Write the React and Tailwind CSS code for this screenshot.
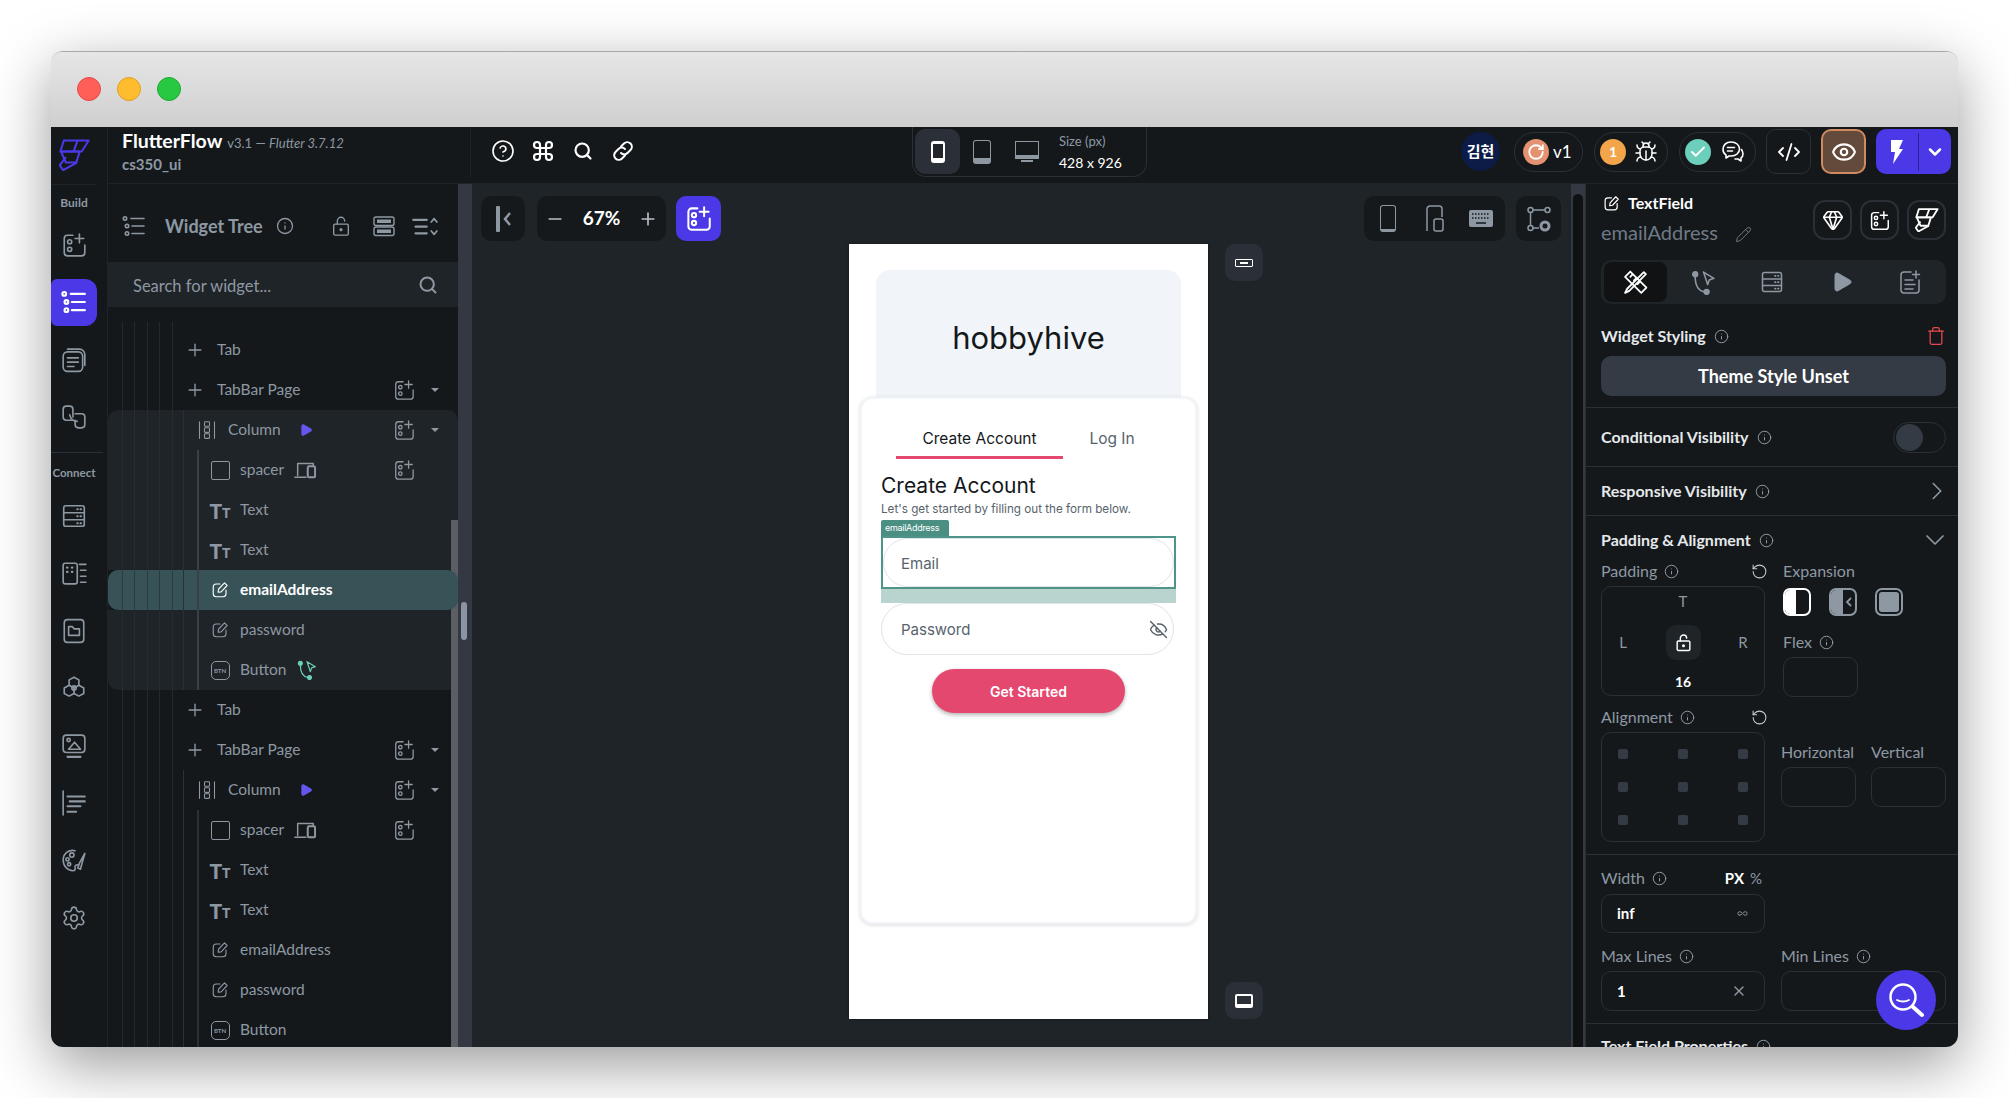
import React from 'react';
import {
  ChevronDown, ChevronRight, CircleHelp, CodeXml, Command, EyeOff, Eye, Gem, Info, Minus, Play, Plus, RotateCcw,
  Search, Settings, Trash, X, Check, Bug, Pencil, Infinity as InfinityIcon,
} from 'lucide-react';

const Ic = ({ s = 24, w = 1.6, c = 'currentColor', vb = '0 0 24 24', className = '', children }) => (
  <svg width={s} height={s} viewBox={vb} fill="none" stroke={c} strokeWidth={w} strokeLinecap="round" strokeLinejoin="round" className={`shrink-0 ${className}`}>
    {children}
  </svg>
);

const AddWidget = (p) => (
  <Ic {...p}>
    <path d="M11 3H6a3 3 0 0 0-3 3v13a3 3 0 0 0 3 3h13a3 3 0 0 0 3-3v-7" />
    <circle cx="8" cy="9" r="1.9" />
    <circle cx="8" cy="16" r="1.9" />
    <path d="M17 2v8M13 6h8" />
  </Ic>
);

const TreeIcon = (p) => (
  <Ic {...p}>
    <circle cx="3" cy="4.5" r="1.7" />
    <circle cx="5" cy="12" r="1.7" />
    <circle cx="5" cy="19.5" r="1.7" />
    <path d="M9 4.5h13M10 12h12M10 19.5h12" />
  </Ic>
);

const Logo = () => (
  <svg width="31" height="32" viewBox="0 0 90 92" fill="none" stroke="#4b39e8" strokeWidth="6" strokeLinejoin="round" className="shrink-0">
    <path d="M14 4H86L66 36H4Z" />
    <path d="M54 4L42 36" />
    <path d="M6 36H60L50 68H20Z" />
    <path d="M20 52L2 76L12 90L52 68" />
  </svg>
);

const LockIcon = (p) => (
  <Ic {...p}>
    <rect x="4" y="10" width="16" height="12" rx="1.5" />
    <path d="M8 10V6.5a4 4 0 0 1 8 0" />
    <circle cx="12" cy="16" r="1" fill="currentColor" />
  </Ic>
);

const RowsIcon = (p) => (
  <Ic {...p}>
    <rect x="2" y="3" width="20" height="8.5" rx="2" />
    <rect x="2" y="13" width="20" height="8.5" rx="2" />
    <path d="M5 7.2h14M5 17.2h14" strokeWidth="3.4" strokeLinecap="butt" />
  </Ic>
);

const SortIcon = (p) => (
  <Ic {...p}>
    <path d="M2 6h12M4 12h10M4 18h10" strokeWidth="2" />
    <path d="M18 8l2.5-3L23 8M18 16l2.5 3 2.5-3" />
  </Ic>
);

const ServerIcon = (p) => (
  <Ic {...p}>
    <rect x="2.5" y="2.5" width="19" height="19" rx="2" />
    <path d="M2.5 9h19M2.5 15.5h19" />
    <path d="M15 5.8h.5M18 5.8h.5M15 12.2h.5M18 12.2h.5M15 18.6h.5M18 18.6h.5" strokeWidth="1.8" />
  </Ic>
);

const PagesIcon = (p) => (
  <Ic {...p}>
    <rect x="2" y="4.5" width="18" height="18" rx="4" />
    <path d="M6 2h11a5 5 0 0 1 5 5v10" />
    <path d="M6 10h10M6 14h10M6 18h6" />
  </Ic>
);

const ConnIcon = (p) => (
  <Ic {...p}>
    <path d="M11 15H5a3 3 0 0 1-3-3V5a3 3 0 0 1 3-3h3a3 3 0 0 1 3 3v7" />
    <path d="M13 9h6a3 3 0 0 1 3 3v7a3 3 0 0 1-3 3h-3a3 3 0 0 1-3-3v-4" />
    <path d="M8 10c1 4 4 6 7 6" />
  </Ic>
);

const ComponentsIcon = (p) => (
  <Ic {...p}>
    <rect x="2" y="3" width="13" height="19" rx="2" />
    <path d="M5.5 7h.5M10 7h.5M5.5 11h.5M10 11h.5" strokeWidth="2" />
    <path d="M17 4h6M18 9.5h5M18 15h5M18 20.5h5" />
  </Ic>
);

const FolderIcon = (p) => (
  <Ic {...p}>
    <rect x="3" y="1.5" width="18" height="21" rx="3" />
    <path d="M7 8h3.5l1.5 2h5v6H7z" />
  </Ic>
);

const HexIcon = (p) => (
  <Ic {...p}>
    <path d="M12 2l4.5 2.5v5L12 12 7.5 9.5v-5z" />
    <path d="M7.5 9.5L3 12v5l4.5 2.5L12 17v-5" />
    <path d="M16.5 9.5L21 12v5l-4.5 2.5L12 17" />
    <circle cx="12" cy="12" r="2" />
  </Ic>
);

const MediaIcon = (p) => (
  <Ic {...p}>
    <rect x="2" y="2" width="20" height="16" rx="3" />
    <path d="M6 22h12" strokeWidth="2" />
    <circle cx="7" cy="6.5" r="1.5" />
    <path d="M7 15l5.500-6.500L18 15z" />
  </Ic>
);

const AlignIcon = (p) => (
  <Ic {...p}>
    <path d="M2 1v22" />
    <path d="M6 6h16M8 10.500h14M6 15h12M6 20h8" strokeWidth="1.9" />
  </Ic>
);

const PaletteIcon = (p) => (
  <Ic {...p}>
    <path d="M13 2.500C7 1 2 5.500 2 11c0 5.500 4 10 9 10 2 0 2.500-1.500 2-3-.5-2 1-2.500 2.500-2.500" />
    <circle cx="10" cy="6.500" r="2" />
    <circle cx="6" cy="10.500" r="1.500" />
    <circle cx="7.500" cy="15" r="1.500" />
    <path d="M22 5l-5 9-1.500 4.500L18 19.500l1-4z" />
  </Ic>
);

const ColumnIcon = (p) => (
  <Ic {...p}>
    <path d="M3 2v20M21 2v20" />
    <rect x="9" y="2" width="6" height="5.500" rx="1" />
    <rect x="9" y="9.300" width="6" height="5.500" rx="1" />
    <rect x="9" y="16.500" width="6" height="5.500" rx="1" />
  </Ic>
);

const FieldIcon = (p) => (
  <Ic {...p}>
    <path d="M12 4H7a4 4 0 0 0-4 4v9a4 4 0 0 0 4 4h9a4 4 0 0 0 4-4v-5" />
    <path d="M18 2.500l3.500 3.500-8 8.500-4 .5.5-4z" />
  </Ic>
);

const ActionIcon = (p) => (
  <Ic {...p}>
    <circle cx="4" cy="4" r="2.300" fill="currentColor" />
    <circle cx="15" cy="21" r="2.300" fill="currentColor" />
    <path d="M4 6c0 9 3 14 9 15" />
    <path d="M12 2l10 6-4.500 1.500L16 14z" />
  </Ic>
);

const DeviceIcon = (p) => (
  <Ic {...p}>
    <path d="M4 18V5h17v2M1 20h12" />
    <rect x="15" y="8" width="8" height="12" rx="1.500" strokeWidth="2.200" />
  </Ic>
);

const RulerIcon = (p) => (
  <Ic {...p}>
    <path d="M7 1.500l15.500 15.500-5 5L2 6.500z" />
    <path d="M7 6.500l2-2M10.500 10l2-2M14 13.500l2-2" />
    <path d="M20 2l2 2L6 20l-4 2 2-4z" />
  </Ic>
);

const NoteIcon = (p) => (
  <Ic {...p}>
    <path d="M13 2H6a3 3 0 0 0-3 3v15a3 3 0 0 0 3 3h12a3 3 0 0 0 3-3V10" />
    <path d="M18 1v7M14.500 4.500h7M7 10h8M7 14.500h10M7 19h8" />
  </Ic>
);

const ChainIcon = (p) => (
  <Ic {...p}>
    <path d="M10 7.500l3-3a4.500 4.500 0 0 1 6.500 6.500l-3 3a4.500 4.500 0 0 1-6.500 0" />
    <path d="M14 16.500l-3 3A4.500 4.500 0 0 1 4.500 13l3-3a4.500 4.500 0 0 1 6.500 0" />
  </Ic>
);

const TtIcon = () => (
  <span className="flex w-[20px] items-end justify-center font-['Lato',sans-serif] font-black leading-none">
    <span className="text-[21px] leading-[17px]">T</span>
    <span className="text-[14px] leading-[12px]">T</span>
  </span>
);

const BtnIcon = () => (
  <span className="flex h-[19px] w-[19px] items-center justify-center rounded-[5px] border-[1.5px] border-current text-[6px] font-bold">BTN</span>
);

const railTop = [
  { Icon: AddWidget },
  { Icon: TreeIcon, active: true },
  { Icon: PagesIcon },
  { Icon: ConnIcon },
];
const railBottom = [ServerIcon, ComponentsIcon, FolderIcon, HexIcon, MediaIcon, AlignIcon, PaletteIcon];

const Rail = () => (
  <div className="flex w-[57px] shrink-0 flex-col border-r border-[#1f2428] bg-[#14181b] text-[#8e98a3]">
    <div className="flex h-[58px] w-[46px] shrink-0 items-center justify-center border-b border-[#1f2428] pb-[2px]"><Logo /></div>
    <div className="mt-[9px] h-[18px] w-[46px] text-center text-[12px] font-bold leading-[18px]">Build</div>
    <div className="mt-[4px]">
      {railTop.map(({ Icon, active }, i) => (
        <div key={i} className="flex h-[57.5px] w-[46px] items-center justify-center">
          {active ? (
            <div className="flex h-[47px] w-[46px] items-center justify-center rounded-r-[12px] rounded-l-[6px] bg-[#4b39e8] text-white"><Icon s={26} w={2} /></div>
          ) : <Icon s={26} w={1.5} />}
        </div>
      ))}
    </div>
    <div className="mt-[6px] h-px w-[52px] bg-[#2b3038]" />
    <div className="mt-[11px] h-[18px] w-[46px] whitespace-nowrap text-center text-[11.5px] font-bold leading-[18px]">Connect</div>
    <div className="mt-[5px]">
      {railBottom.map((Icon, i) => (
        <div key={i} className="flex h-[57.5px] w-[46px] items-center justify-center"><Icon s={26} w={1.5} /></div>
      ))}
      <div className="flex h-[57.5px] w-[46px] items-center justify-center"><Settings size={26} strokeWidth={1.5} /></div>
    </div>
  </div>
);

const TopBar = () => (
  <div className="flex h-[57px] shrink-0 items-start border-b border-[#1f2428] bg-[#14181b]">
    <div className="h-[50px] w-[363px] shrink-0 border-r border-[#1f2428] pl-[14px]">
      <div className="mt-[3px] flex h-[22px] items-baseline whitespace-nowrap">
        <span className="text-[19.5px] font-bold leading-[22px] text-white">FlutterFlow</span>
        <span className="ml-[5px] text-[13px] leading-[22px] text-[#8e98a3]">v3.1 — <i>Flutter 3.7.12</i></span>
      </div>
      <div className="mt-[4px] text-[15px] font-bold leading-[16px] text-[#8e98a3]">cs350_ui</div>
    </div>
    <div className="ml-[20px] mt-[12px] flex items-center gap-[16px] text-white">
      <CircleHelp size={24} strokeWidth={1.6} />
      <Command size={24} strokeWidth={2.2} />
      <span className="flex w-[24px] justify-center"><Search size={20} strokeWidth={2.6} /></span>
      <ChainIcon s={24} w={2} />
    </div>
    <div className="ml-[277px] flex h-[50px] w-[235px] items-center rounded-b-[14px] border border-t-0 border-[#2b3038] pl-[2px]">
      <div className="flex h-[45px] w-[45px] items-center justify-center rounded-[10px] bg-[#2b3038]">
        <div className="h-[22px] w-[14px] rounded-[3px] border-x-2 border-t-[3px] border-b-[5px] border-white bg-[#22262b]" />
      </div>
      <div className="ml-[13px] h-[24px] w-[18px] rounded-[3px] border-[1.5px] border-b-[6px] border-[#8e98a3]" />
      <div className="ml-[24px] flex flex-col items-center">
        <div className="h-[18px] w-[24px] border-[1.5px] border-b-[4px] border-[#8e98a3]" />
        <div className="h-[3px] w-[12px] border-b-2 border-[#8e98a3]" />
      </div>
      <div className="ml-[20px] whitespace-nowrap">
        <div className="text-[13px] leading-[20px] text-[#8e98a3]">Size (px)</div>
        <div className="mt-[2px] text-[14px] leading-[20px] text-white">428 x 926</div>
      </div>
    </div>
    <div className="ml-auto mr-[7px] mt-[2px] flex items-center">
      <div className="flex h-[39px] w-[39px] items-center justify-center rounded-full bg-[#0c1c47] font-['Noto_Sans_CJK_KR',sans-serif] text-[15px] font-bold text-white">김현</div>
      <div className="ml-[14px] flex h-[40px] w-[69px] items-center rounded-full border border-[#2b3038] pl-[8px]">
        <div className="flex h-[26px] w-[26px] items-center justify-center rounded-full bg-[#e49270] text-white"><RotateCcw size={18} className="-scale-x-100" strokeWidth={2.4} /></div>
        <span className="ml-[4px] text-[17px] text-white">v1</span>
      </div>
      <div className="ml-[11px] flex h-[40px] w-[74px] items-center rounded-full border border-[#2b3038] pl-[5px]">
        <div className="flex h-[26px] w-[26px] items-center justify-center rounded-full bg-[#f2a54a] text-[14px] font-bold text-white">1</div>
        <Bug size={24} strokeWidth={1.5} className="ml-[8px] text-white" />
      </div>
      <div className="ml-[11px] flex h-[40px] w-[77px] items-center rounded-full border border-[#2b3038] pl-[5px]">
        <div className="flex h-[26px] w-[26px] items-center justify-center rounded-full bg-[#6ccfbb] text-white"><Check size={18} strokeWidth={2.4} /></div>
        <svg width="24" height="24" viewBox="0 0 24 24" fill="none" stroke="white" strokeWidth="1.600" strokeLinejoin="round" strokeLinecap="round" className="ml-[10px] shrink-0">
          <path d="M10 2c5 0 8.500 3 8.500 7s-3.500 7-8.500 7H8l-3 2v-3C3 13.800 2 12 2 9.500 2 5 5 2 10 2zM6.500 7.500h7M6.500 11h5M20.500 9.500c1 1.500 1.500 3 1.500 4.500s-.5 3-2 4v3l-3-2h-3" />
        </svg>
      </div>
      <div className="ml-[10px] flex h-[45px] w-[45px] items-center justify-center rounded-[10px] border border-[#2b3038] text-white"><CodeXml size={24} strokeWidth={1.8} /></div>
      <div className="ml-[10px] flex h-[45px] w-[45px] items-center justify-center rounded-[10px] border-2 border-[#d08a60] bg-[#644a3b] text-white"><Eye size={26} strokeWidth={2} /></div>
      <div className="ml-[10px] flex h-[45px] w-[75px] items-center rounded-[10px] bg-[#4b39e8] text-white">
        <div className="flex h-[38px] w-[43px] items-center justify-center border-r border-[#2d2399]">
          <svg width="14" height="24" viewBox="0 0 14 24" fill="white"><path d="M1 0H13L9 9H13L3 24L5 12H1Z" /></svg>
        </div>
        <ChevronDown size={20} strokeWidth={3} className="ml-[6px]" />
      </div>
    </div>
  </div>
);

const rowIcons = {
  plus: <Plus size={20} strokeWidth={1.6} />,
  column: <ColumnIcon s={20} w={1.3} />,
  box: <div className="h-[19px] w-[19px] rounded-[2px] border-[1.5px] border-current" />,
  text: <TtIcon />,
  field: <FieldIcon s={18} w={1.5} />,
  btn: <BtnIcon />,
};

const treeBlock = [
  { label: 'Tab', icon: 'plus', level: 0 },
  { label: 'TabBar Page', icon: 'plus', level: 0, add: true, caret: true },
  { label: 'Column', icon: 'column', level: 1, add: true, caret: true, play: true, group: 'top' },
  { label: 'spacer', icon: 'box', level: 2, add: true, device: true, group: 'mid' },
  { label: 'Text', icon: 'text', level: 2, group: 'mid' },
  { label: 'Text', icon: 'text', level: 2, group: 'mid' },
  { label: 'emailAddress', icon: 'field', level: 2, group: 'mid' },
  { label: 'password', icon: 'field', level: 2, group: 'mid' },
  { label: 'Button', icon: 'btn', level: 2, action: true, group: 'end' },
];

const TreeRow = ({ row, shaded, selected }) => {
  const indent = ['pl-[77px]', 'pl-[89px]', 'pl-[102px]'][row.level];
  const gap = ['gap-[12px]', 'gap-[11px]', 'gap-[10px]'][row.level];
  return (
    <div className={`relative flex h-[40px] items-center ${indent} ${gap} text-[15.5px] ${selected ? 'z-10 rounded-[10px] bg-[#385358] font-bold text-white' : 'text-[#8e98a3]'} ${shaded && !selected ? 'bg-[#1f2428]' : ''} ${row.group === 'top' && shaded ? 'rounded-t-[10px]' : ''} ${row.group === 'end' && shaded ? 'rounded-b-[10px]' : ''}`}>
      <span className="flex w-[20px] shrink-0 justify-center">{rowIcons[row.icon]}</span>
      <span className="whitespace-nowrap">{row.label}</span>
      {row.play && <Play size={14} fill="#6656f0" stroke="#6656f0" className="ml-[7px]" />}
      {row.device && <DeviceIcon s={22} w={1.6} />}
      {row.action && shaded && <ActionIcon s={20} w={1.5} c="#6ccfbb" className="text-[#6ccfbb]" />}
      {row.add && (
        <div className="absolute right-[15px] flex w-[50px] items-center">
          <AddWidget s={22} w={1.4} />
          {row.caret && <span className="ml-[16px] h-0 w-0 border-x-[4px] border-t-[4px] border-x-transparent border-t-[#8e98a3]" />}
        </div>
      )}
    </div>
  );
};

const guides = ['left-[14px]', 'left-[26px]', 'left-[39px]', 'left-[51px]', 'left-[64px]'];

const LeftPanel = () => (
  <div className="relative flex w-[364px] shrink-0 bg-[#14181b]">
    <div className="w-[350px] shrink-0">
      <div className="flex h-[78px] items-center pl-[14px] pt-[6px] text-[#8e98a3]">
        <TreeIcon s={24} w={1.6} />
        <span className="ml-[19px] whitespace-nowrap text-[18px] font-bold">Widget Tree</span>
        <Info size={18} strokeWidth={1.7} className="ml-[13px]" />
        <LockIcon s={22} w={1.5} className="ml-[36px]" />
        <RowsIcon s={24} w={1.4} className="ml-[20px]" />
        <SortIcon s={27} w={1.5} className="ml-[15px]" />
      </div>
      <div className="flex h-[45px] items-center justify-between bg-[#1f2428] pl-[25px] pr-[20px] text-[16.5px] text-[#8e98a3]">
        <span className="mt-[3px]">Search for widget...</span>
        <Search size={20} strokeWidth={2.4} />
      </div>
      <div className="relative pt-[23px]">
        {treeBlock.map((r, i) => <TreeRow key={i} row={r} shaded={Boolean(r.group)} selected={r.label === 'emailAddress'} />)}
        {treeBlock.map((r, i) => <TreeRow key={`b${i}`} row={r} />)}
        {guides.map((g) => <div key={g} className={`absolute top-[15px] bottom-0 z-20 w-px bg-[#2b3038]/70 ${g}`} />)}
        <div className="absolute left-[75px] top-[103px] z-20 h-[280px] w-px bg-[#2b3038]" />
        <div className="absolute left-[89px] top-[143px] z-20 h-[240px] w-[2px] bg-[#3a4048]" />
        <div className="absolute left-[75px] top-[463px] bottom-0 w-px bg-[#2b3038]" />
        <div className="absolute left-[89px] top-[503px] bottom-0 w-[2px] bg-[#2b3038]" />
        <div className="absolute right-0 top-[213px] bottom-0 w-[7px] bg-[#5b5f63]" />
      </div>
    </div>
    <div className="relative w-[14px] shrink-0 bg-[#333842]">
      <div className="absolute left-[3px] top-[418px] h-[38px] w-[6px] rounded-full bg-[#8a94a3]" />
    </div>
  </div>
);

const Canvas = () => (
  <div className="flex min-w-0 flex-1 flex-col bg-[#1f2428] px-[9px] pt-[12px]">
    <div className="flex h-[45px] items-center">
      <div className="flex h-[45px] w-[44px] items-center justify-center gap-[3px] rounded-[10px] bg-[#15191c] text-[#8e98a3]">
        <div className="h-[26px] w-[4px] rounded-[1px] bg-[#8e98a3]" />
        <svg width="8" height="14" viewBox="0 0 8 14" fill="none" stroke="#8e98a3" strokeWidth="2.500"><path d="M7 1L2 7l5 6" /></svg>
      </div>
      <div className="ml-[12px] flex h-[45px] w-[129px] items-center justify-between rounded-[10px] bg-[#15191c] px-[8px] text-[#b8c0c8]">
        <Minus size={20} strokeWidth={2} />
        <span className="text-[19px] font-bold text-white">67%</span>
        <Plus size={20} strokeWidth={2} />
      </div>
      <div className="ml-[10px] flex h-[45px] w-[45px] items-center justify-center rounded-[10px] bg-[#4b39e8] text-white"><AddWidget s={27} w={1.8} /></div>
      <div className="ml-auto flex h-[45px] w-[141px] items-center justify-between rounded-[10px] bg-[#15191c] pl-[16px] pr-[12px] text-[#8e98a3]">
        <div className="h-[27px] w-[16px] rounded-[3px] border-[1.5px] border-b-[3px] border-current" />
        <svg width="19" height="27" viewBox="0 0 19 27" fill="none" stroke="currentColor" strokeWidth="1.500" className="ml-[3px]"><path d="M2 26V4a3 3 0 0 1 3-3h9a3 3 0 0 1 3 3v8" /><rect x="9" y="14" width="9" height="12" rx="2" /></svg>
        <svg width="24" height="17" viewBox="0 0 24 17">
          <rect width="24" height="17" rx="2" fill="currentColor" />
          <path d="M3 4h18M3 8h18" stroke="#15191c" strokeWidth="1.600" strokeDasharray="1.500 1.500" />
          <path d="M7 13h10" stroke="#15191c" strokeWidth="1.600" />
        </svg>
      </div>
      <div className="ml-[11px] mr-px flex h-[45px] w-[45px] items-center justify-center rounded-[10px] bg-[#15191c] text-[#8e98a3]">
        <svg width="24" height="26" viewBox="0 0 24 26" fill="none" stroke="currentColor" strokeWidth="1.500">
          <circle cx="3.500" cy="4" r="2.500" /><circle cx="20.500" cy="4" r="2.500" /><circle cx="3.500" cy="22" r="2.500" />
          <path d="M6 4h12M3.500 6.500v13M6 22h6" /><circle cx="18" cy="20" r="4" strokeWidth="3" />
        </svg>
      </div>
    </div>
    <div className="mt-[3px] flex pl-[368px]">
      <Phone />
      <div className="ml-[17px] flex h-[775px] flex-col justify-between">
        <div className="flex h-[37px] w-[38px] items-center justify-center rounded-[10px] bg-[#2b3038]">
          <div className="flex h-[8px] w-[18px] items-center justify-center rounded-[1px] border border-white"><div className="h-[2px] w-[8px] bg-white" /></div>
        </div>
        <div className="flex h-[37px] w-[38px] items-center justify-center rounded-[10px] bg-[#2b3038]">
          <div className="h-[14px] w-[18px] rounded-[2px] border-2 border-b-[4px] border-white" />
        </div>
      </div>
    </div>
  </div>
);

const Phone = () => (
  <div className="flex h-[775px] w-[359px] flex-col bg-white font-['Inter',sans-serif] shadow-[0_0_3px_rgba(0,0,0,0.4)]">
    <div className="mx-[27px] mt-[26px] flex h-[127px] shrink-0 items-start justify-center rounded-t-[14px] bg-[#f1f4f8] pt-[46px]">
      <span className="text-[31px] leading-[44px] text-[#14181b]">hobbyhive</span>
    </div>
    <div className="relative mx-[11px] h-[527px] rounded-[12px] border-2 border-[#f1f4f8] bg-white pl-[19px] pt-[21px] shadow-[0_1px_4px_rgba(0,0,0,0.15)]">
      <div className="ml-[15px] flex h-[39px] text-[15.5px]">
        <div className="flex w-[167px] items-start justify-center border-b-[3px] border-[#e5486f] pt-[7px] text-[#14181b]">Create Account</div>
        <div className="flex w-[98px] items-start justify-center pt-[7px] text-[#57636c]">Log In</div>
      </div>
      <div className="mt-[13px] text-[21px] leading-[28px] text-[#14181b]">Create Account</div>
      <div className="mt-px whitespace-nowrap text-[11.7px] leading-[16px] text-[#57636c]">Let's get started by filling out the form below.</div>
      <div className="mt-[3px] h-[16px] w-[68px] rounded-t-[2px] bg-[#4b8f83] pl-[4px] text-[9px] leading-[16px] tracking-[-0.3px] text-white">emailAddress</div>
      <div className="w-[295px] bg-[#b9d4cf] pb-[14px]">
        <div className="h-[53px] border-2 border-[#4f9488] bg-white">
          <div className="flex h-full items-center rounded-full border border-[#e0e3e7] pl-[17px] pt-[3px] text-[15px] text-[#57636c]">Email</div>
        </div>
      </div>
      <div className="flex h-[52px] w-[293px] items-center justify-between rounded-full border border-[#e0e3e7] pl-[19px] pr-[5px] pt-[2px] text-[15px] text-[#57636c]">
        <span>Password</span>
        <EyeOff size={19} strokeWidth={1.8} className="-mt-[2px]" />
      </div>
      <div className="ml-[51px] mt-[14px] flex h-[44px] w-[193px] items-center justify-center rounded-full bg-[#e5486f] pt-[1px] text-[14px] font-semibold text-white shadow-[0_2px_4px_rgba(0,0,0,0.3)]">Get Started</div>
    </div>
  </div>
);

const Label = ({ children, info = true, className = '' }) => (
  <div className={`flex h-[20px] items-center gap-[7px] whitespace-nowrap text-[16px] text-[#8e98a3] ${className}`}>
    {children}
    {info && <Info size={15} strokeWidth={1.6} />}
  </div>
);

const Heading = ({ children, className = '' }) => (
  <div className={`flex h-[20px] items-center gap-[8px] whitespace-nowrap text-[16px] font-bold text-[#e6e9ec] ${className}`}>
    {children}
    <Info size={15} strokeWidth={1.6} className="text-[#8e98a3]" />
  </div>
);

const Box = ({ className = '', children }) => (
  <div className={`rounded-[10px] border border-[#2b3038] ${className}`}>{children}</div>
);

const SquareBtn = ({ children }) => (
  <div className="flex h-[40px] w-[39px] items-center justify-center rounded-[12px] border-2 border-[#2b3038] text-white">{children}</div>
);

const Logo2 = () => (
  <svg width="24" height="24" viewBox="0 0 90 92" fill="none" stroke="white" strokeWidth="7" strokeLinejoin="round" className="shrink-0">
    <path d="M14 4H86L66 36H4Z" />
    <path d="M54 4L42 36" />
    <path d="M6 36H60L50 68H20Z" />
    <path d="M20 52L2 76L12 90L52 68" />
  </svg>
);

const RightPanel = () => (
  <div className="w-[373px] shrink-0 overflow-hidden border-l border-[#2b3038] bg-[#14181b]">
    <div className="border-b border-[#2b3038] pb-[11px] pl-[15px] pr-[12px] pt-[16px]">
      <div className="flex h-[40px] justify-between">
        <div className="-mt-[7px]">
          <div className="flex h-[20px] items-center gap-[8px] pl-[2px] text-white">
            <FieldIcon s={17} w={1.7} />
            <span className="text-[16px] font-bold">TextField</span>
          </div>
          <div className="mt-[7px] flex h-[24px] items-center text-[#6f7a85]">
            <span className="text-[20px]">emailAddress</span>
            <Pencil size={17} strokeWidth={1.4} className="ml-[17px] mt-[4px]" />
          </div>
        </div>
        <div className="flex gap-[8px]">
          <SquareBtn><Gem size={22} strokeWidth={1.8} /></SquareBtn>
          <SquareBtn><AddWidget s={21} w={1.7} /></SquareBtn>
          <SquareBtn><Logo2 /></SquareBtn>
        </div>
      </div>
      <div className="mt-[20px] flex h-[44px] items-center rounded-[10px] bg-[#1f2428] pl-[3px] text-[#8e98a3]">
        <div className="flex h-[40px] w-[63px] items-center justify-center rounded-[8px] bg-[#101213] text-white"><RulerIcon s={25} w={1.7} /></div>
        <span className="ml-[24px]"><ActionIcon s={25} w={1.5} /></span>
        <span className="ml-[44px]"><ServerIcon s={24} w={1.5} /></span>
        <Play size={24} fill="currentColor" strokeWidth={1} className="ml-[46px]" />
        <span className="ml-[44px]"><NoteIcon s={24} w={1.5} /></span>
      </div>
      <div className="mt-[22px] flex h-[20px] items-center justify-between">
        <Heading>Widget Styling</Heading>
        <Trash size={20} strokeWidth={1.5} className="text-[#e5484d]" />
      </div>
      <div className="mt-[10px] flex h-[40px] items-center justify-center rounded-[10px] bg-[#353b45] text-[18px] font-bold text-white">Theme Style Unset</div>
    </div>

    <div className="flex h-[59px] items-center justify-between border-b border-[#2b3038] pl-[15px] pr-[12px]">
      <Heading>Conditional Visibility</Heading>
      <div className="flex h-[31px] w-[53px] items-center rounded-full border border-[#2b3038] pl-[2px]">
        <div className="h-[27px] w-[27px] rounded-full bg-[#353b45]" />
      </div>
    </div>
    <div className="flex h-[49px] items-center justify-between border-b border-[#2b3038] pl-[15px] pr-[6px]">
      <Heading>Responsive Visibility</Heading>
      <ChevronRight size={30} strokeWidth={1.3} className="text-[#8e98a3]" />
    </div>

    <div className="border-b border-[#2b3038] pb-[12px] pl-[15px] pr-[12px] pt-[14px]">
      <div className="flex h-[20px] items-center justify-between">
        <Heading>Padding &amp; Alignment</Heading>
        <ChevronDown size={32} strokeWidth={1.3} className="-mr-[5px] text-[#8e98a3]" />
      </div>
      <div className="mt-[11px] flex">
        <div className="w-[164px] shrink-0">
          <div className="flex items-center justify-between">
            <Label>Padding</Label>
            <RotateCcw size={17} strokeWidth={1.5} className="-mr-[3px] text-[#c5cbd2]" />
          </div>
          <Box className="mt-[5px] grid h-[110px] grid-cols-[42px_1fr_42px] grid-rows-[28px_54px_24px] items-center justify-items-center text-[15px] text-[#8e98a3]">
            <span className="col-start-2">T</span>
            <span className="col-start-1 row-start-2">L</span>
            <div className="col-start-2 row-start-2 flex h-[35px] w-[35px] items-center justify-center rounded-[10px] bg-[#1f2428] text-white"><LockIcon s={19} w={1.8} /></div>
            <span className="col-start-3 row-start-2">R</span>
            <span className="col-start-2 row-start-3 text-[14px] font-bold text-white">16</span>
          </Box>
        </div>
        <div className="ml-[18px]">
          <Label info={false}>Expansion</Label>
          <div className="mt-[7px] flex gap-[18px]">
            <div className="flex h-[28px] w-[28px] overflow-hidden rounded-[7px] border-2 border-white">
              <div className="w-[11px] bg-white" />
            </div>
            <div className="flex h-[28px] w-[28px] items-center overflow-hidden rounded-[7px] border-2 border-[#8e98a3]">
              <div className="h-full w-[12px] bg-[#8e98a3]" />
              <svg width="8" height="10" viewBox="0 0 8 10" fill="none" stroke="#8e98a3" strokeWidth="1.800" className="ml-[2px]"><path d="M6 1L2 5l4 4" /></svg>
            </div>
            <div className="flex h-[28px] w-[28px] rounded-[7px] border-2 border-[#8e98a3] p-[2px]">
              <div className="h-full w-full rounded-[3px] bg-[#8e98a3]" />
            </div>
          </div>
          <Label className="mt-[16px]">Flex</Label>
          <Box className="mt-[5px] h-[40px] w-[75px]" />
        </div>
      </div>
      <div className="mt-[10px] flex">
        <div className="w-[164px] shrink-0">
          <div className="flex items-center justify-between">
            <Label>Alignment</Label>
            <RotateCcw size={17} strokeWidth={1.5} className="-mr-[3px] text-[#c5cbd2]" />
          </div>
          <Box className="mt-[5px] grid h-[110px] grid-cols-[42px_1fr_42px] grid-rows-3 items-center justify-items-center py-[4px]">
            {Array.from({ length: 9 }).map((_, i) => <div key={i} className="h-[10px] w-[10px] rounded-[2px] bg-[#353b45]" />)}
          </Box>
        </div>
        <div className="ml-[16px] mt-[35px] flex gap-[15px]">
          <div>
            <Label info={false}>Horizontal</Label>
            <Box className="mt-[5px] h-[40px] w-[75px]" />
          </div>
          <div>
            <Label info={false}>Vertical</Label>
            <Box className="mt-[5px] h-[40px] w-[75px]" />
          </div>
        </div>
      </div>
    </div>

    <div className="border-b border-[#2b3038] pb-[12px] pl-[15px] pr-[12px] pt-[13px]">
      <div className="flex h-[20px] w-[164px] items-center justify-between">
        <Label>Width</Label>
        <div className="flex items-baseline gap-[6px] pr-[3px]">
          <span className="text-[15px] font-bold text-white">PX</span>
          <span className="text-[15px] text-[#8e98a3]">%</span>
        </div>
      </div>
      <Box className="mt-[6px] flex h-[39px] w-[164px] items-center justify-between pl-[15px] pr-[16px]">
        <span className="text-[15px] font-bold text-white">inf</span>
        <InfinityIcon size={11} className="text-[#8e98a3]" />
      </Box>
      <div className="mt-[13px] flex gap-[16px]">
        <div className="w-[164px]">
          <Label>Max Lines</Label>
          <Box className="mt-[5px] flex h-[40px] items-center justify-between pl-[15px] pr-[17px]">
            <span className="text-[15px] font-bold text-white">1</span>
            <X size={16} strokeWidth={2} className="text-[#8e98a3]" />
          </Box>
        </div>
        <div className="w-[165px]">
          <Label>Min Lines</Label>
          <Box className="mt-[5px] h-[40px]" />
        </div>
      </div>
    </div>
    <div className="pl-[15px] pt-[12px]"><Heading>Text Field Properties</Heading></div>
  </div>
);

const App = () => (
  <div className="h-[1098px] w-[2009px] overflow-hidden bg-white pl-[51px] pt-[51px] font-['Lato',sans-serif]">
    <div className="relative flex h-[996px] w-[1907px] flex-col overflow-hidden rounded-[12px] border-t border-[#a8a8a8] shadow-[0_18px_60px_rgba(0,0,0,0.4)]">
      <div className="flex h-[75px] shrink-0 items-center gap-[16px] bg-gradient-to-b from-[#e6e6e6] to-[#cfcfcf] pb-[2px] pl-[26px]">
        <div className="h-[24px] w-[24px] rounded-full border border-[#e5484d] bg-[#ff5f57]" />
        <div className="h-[24px] w-[24px] rounded-full border border-[#e0a020] bg-[#febc2e]" />
        <div className="h-[24px] w-[24px] rounded-full border border-[#20a834] bg-[#28c840]" />
      </div>
      <div className="flex min-h-0 flex-1">
        <Rail />
        <div className="flex min-w-0 flex-1 flex-col">
          <TopBar />
          <div className="flex min-h-0 flex-1">
            <LeftPanel />
            <Canvas />
            <div className="relative w-[14px] shrink-0 bg-[#333842]">
              <div className="absolute inset-x-[2px] top-[10px] bottom-0 rounded-t-full bg-[#0f1113]" />
            </div>
            <RightPanel />
          </div>
        </div>
      </div>
      <div className="absolute bottom-[17px] right-[22px] flex h-[60px] w-[60px] items-center justify-center rounded-full bg-[#4b39e8]">
        <svg width="36" height="36" viewBox="0 0 36 36" fill="none" stroke="white" strokeWidth="2.500" strokeLinecap="round">
          <circle cx="15" cy="15" r="12.500" />
          <path d="M25 25l9 8" strokeWidth="4" />
          <path d="M9 18c3 2 9 2 12 0" strokeWidth="1.800" />
        </svg>
      </div>
    </div>
  </div>
);

export default App;
